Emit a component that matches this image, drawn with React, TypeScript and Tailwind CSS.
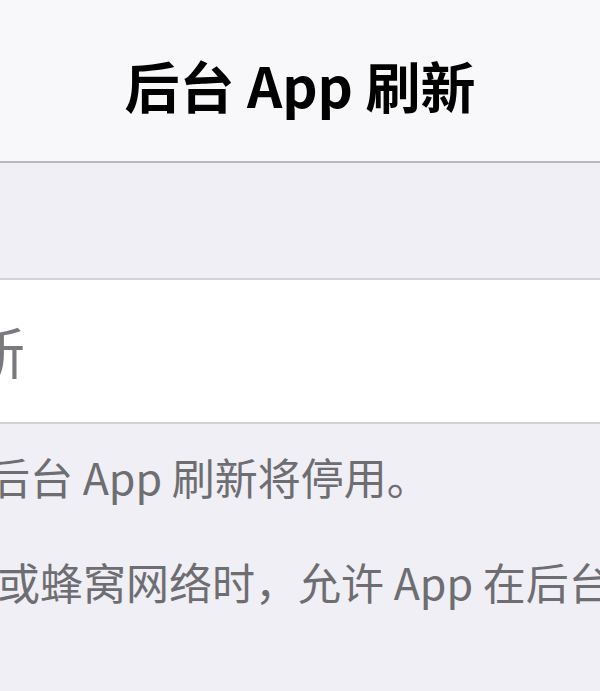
const font = { fontFamily: '"Noto Sans CJK SC", "Noto Sans", sans-serif' }

export default function App() {
  return (
    <div style={font} className="w-[600px] h-[691px] overflow-hidden bg-[#f0eff5]">
      <header className="h-[163px] bg-[#f8f8fa] border-b-2 border-[#b9b9bd] flex items-center justify-center">
        <h1 className="text-[55px] font-semibold text-black leading-none pt-[8px]">
          后台 App 刷新
        </h1>
      </header>

      <div className="h-[115px]" />

      <div className="h-[146px] bg-white border-y-2 border-[#d3d3d7] overflow-hidden flex items-center">
        <div className="w-[25px] flex justify-end whitespace-nowrap">
          <span className="text-[56px] leading-none text-[#7a7a7e] pb-[2px]">后台 App 刷新</span>
        </div>
      </div>

      <div className="flex flex-col text-[43px] leading-none text-[#6d6d72] whitespace-nowrap">
        <p className="mt-[31px] -ml-[13px]">后台 App 刷新将停用。</p>
        <p className="mt-[62px] -ml-[46px]">网或蜂窝网络时，允许 App 在后台刷新内容。</p>
      </div>
    </div>
  )
}
